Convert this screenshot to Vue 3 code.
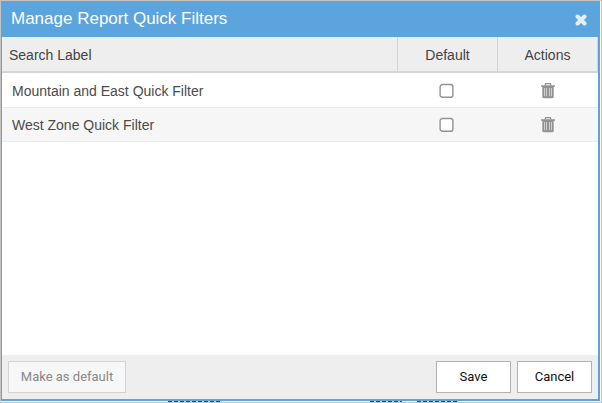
<script setup>
const filters = [
  { name: 'Mountain and East Quick Filter' },
  { name: 'West Zone Quick Filter' },
]
</script>

<template>
  <div class="frame">
    <section class="dialog">
      <header class="title">
        <h1>Manage Report Quick Filters</h1>
        <svg class="close" viewBox="0 0 12 12"><path d="M2.5 2.5L9.5 9.5M9.5 2.5L2.5 9.5" /></svg>
      </header>
      <div class="row head">
        <div class="label">Search Label</div>
        <div class="cell">Default</div>
        <div class="cell">Actions</div>
      </div>
      <div class="body">
        <div v-for="f in filters" :key="f.name" class="row item">
          <div class="label">{{ f.name }}</div>
          <div class="cell">
            <svg class="check" viewBox="0 0 15 15"><rect x="1.1" y="1.5" width="12.8" height="12.8" rx="2.4" /></svg>
          </div>
          <div class="cell">
            <svg class="trash" viewBox="0 0 14 16">
              <path class="line" d="M4 2.6L4.7 .7H9.3L10 2.6" />
              <path d="M0 2.2H14V3.8H0ZM1.3 3.8H12.7V13.8Q12.7 15.3 11.2 15.3H2.8Q1.3 15.3 1.3 13.8Z" />
              <path class="slots" d="M3.5 5V13.2M5.5 5V13.2M8.5 5V13.2M10.5 5V13.2" />
            </svg>
          </div>
        </div>
      </div>
      <footer class="foot">
        <button class="btn wide" disabled>Make as default</button>
        <button class="btn save">Save</button>
        <button class="btn">Cancel</button>
      </footer>
    </section>
    <div class="under"><span class="bit a"></span><span class="bit b"></span><span class="bit c"></span></div>
  </div>
</template>

<style>
body { margin: 0; overflow: hidden; }
</style>
<style scoped>
* { box-sizing: border-box; }
.frame { width: 602px; height: 403px; border: 1px solid #c3c3c3; padding-right: 1px; background: #fff; font-family: "Liberation Sans", Arial, sans-serif; }
.dialog { height: 400px; display: flex; flex-direction: column; border: solid #5ba4de; border-width: 0 2px 2px 1px; background: #fff; }
.title { height: 36px; flex: none; background: #5ba4de; display: flex; align-items: center; justify-content: space-between; padding: 0 11px 0 9px; }
h1 { margin: 0; font-size: 17px; font-weight: 400; line-height: 36px; color: #fff; }
.close { width: 12px; height: 12px; margin-top: 2px; fill: none; stroke: #e3effa; stroke-width: 4; stroke-linecap: round; }
.row { display: flex; flex: none; align-items: stretch; font-size: 14px; color: #444; }
.label { flex: 1; display: flex; align-items: center; }
.cell { width: 100px; display: flex; align-items: center; justify-content: center; }
.head { height: 36px; background: #eee; border-bottom: 2px solid #d5d5d5; }
.head .label { padding: 2px 0 0 7px; }
.head .cell { padding-top: 2px; border-left: 1px solid #d3d3d3; }
.head .cell:last-child { width: 101px; border-right: 1px solid #d3d3d3; }
.body { flex: 1; }
.item { height: 35px; border-bottom: 1px solid #ebebeb; color: #4b4b4b; }
.item + .item { height: 34px; background: #f6f6f6; }
.item .label { padding: 2px 0 0 10px; }
.item + .item .label { padding-top: 0; }
.item .cell:last-child { width: 101px; }
.check { width: 15px; height: 15px; margin: 1px 0 0 -1px; fill: #fff; stroke: #929292; stroke-width: 1.4; }
.item + .item .check { margin-top: 0; }
.trash { width: 14px; height: 16px; margin: 1px 0 0 1px; fill: #929292; }
.trash .line { fill: none; stroke: #929292; stroke-width: 1.3; }
.trash .slots { fill: none; stroke: #d0d0d0; stroke-width: 1; }
.foot { height: 44px; flex: none; background: #eee; display: flex; align-items: center; padding: 0 6px; }
.btn { width: 75px; height: 32px; padding: 0 0 2px; border: 1px solid #b3b3b3; background: #fff; color: #111; font: 13px Roboto, Arial, sans-serif; }
.wide { width: 118px; border-color: #d3d3d3; background: #f7f7f7; color: #888; }
.save { margin: 0 6px 0 auto; }
.under { height: 1px; display: flex; padding-left: 167px; }
.bit { height: 1px; background: repeating-linear-gradient(90deg, #3f454c 0 4px, #d9dde0 4px 6px); }
.a { width: 54px; }
.b { width: 32px; margin-left: 148px; }
.c { width: 42px; margin-left: 15px; }
</style>
